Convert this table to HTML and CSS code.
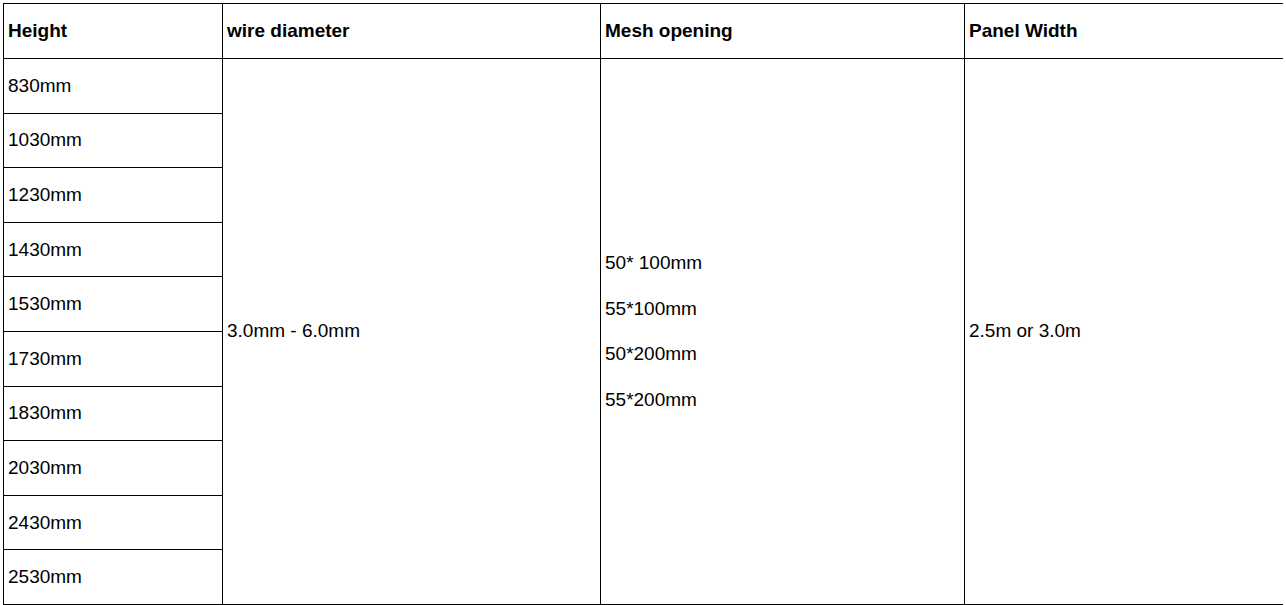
FILE: index.html
```html
<!DOCTYPE html>
<html>
<head>
<meta charset="utf-8">
<link rel="stylesheet" href="styles.css">
</head>
<body>
<table class="spec">
  <colgroup>
    <col class="c1"><col class="c2"><col class="c3"><col class="c4">
  </colgroup>
  <thead>
    <tr class="head">
      <th>Height</th>
      <th>wire diameter</th>
      <th>Mesh opening</th>
      <th>Panel Width</th>
    </tr>
  </thead>
  <tbody>
    <tr class="r"><td>830mm</td><td rowspan="10">3.0mm - 6.0mm</td><td rowspan="10"><p class="line">50* 100mm</p><p class="line">55*100mm</p><p class="line">50*200mm</p><p class="line">55*200mm</p></td><td rowspan="10">2.5m or 3.0m</td></tr>
    <tr class="r"><td>1030mm</td></tr>
    <tr class="r"><td>1230mm</td></tr>
    <tr class="r"><td>1430mm</td></tr>
    <tr class="r"><td>1530mm</td></tr>
    <tr class="r"><td>1730mm</td></tr>
    <tr class="r"><td>1830mm</td></tr>
    <tr class="r"><td>2030mm</td></tr>
    <tr class="r"><td>2430mm</td></tr>
    <tr class="r"><td>2530mm</td></tr>
  </tbody>
</table>
</body>
</html>
```
FILE: styles.css
```css
html, body {
  background: #ffffff;
}
body {
  margin: 3px;
  font-family: "Liberation Sans", Arial, sans-serif;
  font-size: 19px;
  color: #000000;
}
.spec {
  border-collapse: collapse;
  width: 1282px;
  table-layout: fixed;
}
.c1 { width: 219px; }
.c2 { width: 378px; }
.c3 { width: 364px; }
.c4 { width: 321px; }
.spec th,
.spec td {
  border: 1px solid #000000;
  padding: 0 3px 0 4px;
  text-align: left;
  vertical-align: middle;
  font-size: 19px;
  line-height: 22px;
}
.spec th {
  font-weight: bold;
}
.head th {
  height: 54px;
}
.r td {
  height: 53.6px;
}
.line {
  margin: 0;
  line-height: 45.5px;
}
```
